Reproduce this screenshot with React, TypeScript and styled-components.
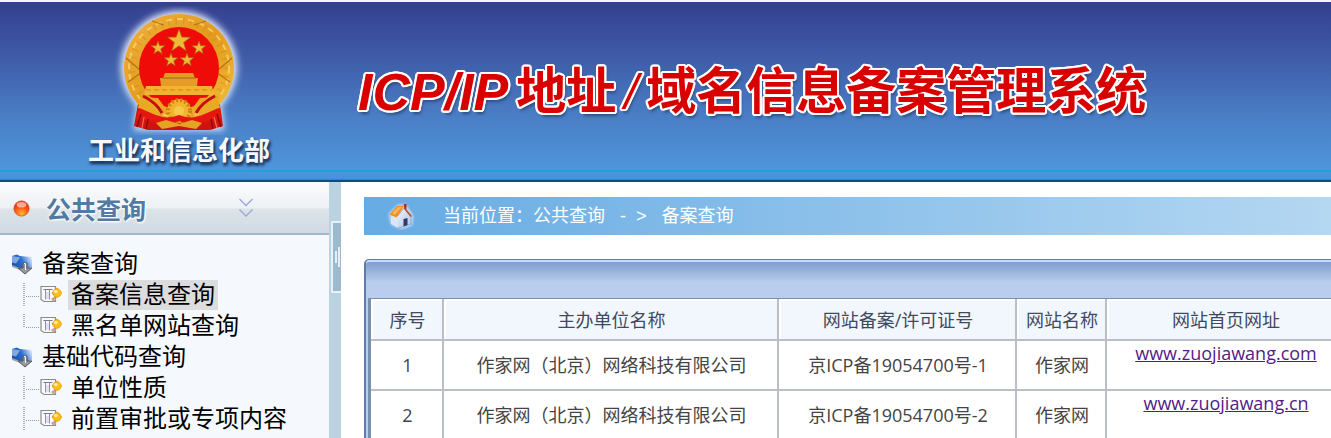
import React from "react";
import styled, { createGlobalStyle } from "styled-components";

const GlobalStyle = createGlobalStyle`
  *, *::before, *::after { box-sizing: border-box; }
  body {
    margin: 0;
    background: #fff;
    font-family: "Open Sans", "Noto Sans CJK SC", sans-serif;
    font-size: 18px;
    color: #444;
  }
  h1, h2, p, ul { margin: 0; padding: 0; }
  ul { list-style: none; }
`;

const Shell = styled.div`
  display: flex;
  flex-direction: column;
  height: 100vh;
  overflow: hidden;
`;

const Banner = styled.header`
  flex: none;
  display: flex;
  align-items: flex-start;
  border-top: 2px solid #f4f6fa;
  border-bottom: 2px solid #0d4c8c;
  background: linear-gradient(#343f90 0, #3f5ca8 56px, #4a7fc6 116px, #4f95da 168px, #22a0dc 168px, #22a0dc 170px, #4f95da 170px, #4a90d8 177px, #2f74bc 178px);
  white-space: nowrap;
`;

const Ministry = styled.div`
  display: flex;
  flex-direction: column;
  align-items: center;
  flex: none;
  width: 358px;
  height: 178px;
  padding-top: 4px;
`;

const MinistryName = styled.p`
  font-family: "Noto Sans CJK SC", sans-serif;
  font-size: 26px;
  line-height: 28px;
  font-weight: 700;
  color: #f6f8fc;
  text-shadow: 1px 3px 3px #17365f, 2px 2px 3px #2a4c7c;
`;

const Title = styled.h1`
  display: flex;
  align-items: center;
  gap: 8px;
  padding-top: 62px;
  font-size: 50px;
  line-height: 56px;
  font-weight: 700;
  color: #d90000;
  font-family: "Liberation Sans", "Noto Sans CJK SC", sans-serif;
  text-shadow: 2px 0 0 #fff, -2px 0 0 #fff, 0 2px 0 #fff, 0 -2px 0 #fff,
    1px 1px 0 #fff, -1px 1px 0 #fff, 1px -1px 0 #fff, -1px -1px 0 #fff,
    2px 1px 0 #fff, -2px 1px 0 #fff, 2px -1px 0 #fff, -2px -1px 0 #fff,
    1px 2px 0 #fff, -1px 2px 0 #fff, 1px -2px 0 #fff, -1px -2px 0 #fff,
    2px 4px 3px #2d4f80;
`;

const TitleLatin = styled.span`
  font-size: 52px;
  font-style: italic;
`;

const TitleSlash = styled.span`
  font-weight: 400;
  font-style: italic;
`;

const Body = styled.div`
  flex: 1;
  display: flex;
  min-height: 0;
`;

const Sidebar = styled.nav`
  flex: none;
  width: 329px;
  overflow: hidden;
  background: #f5f9fe;
`;

const MenuHeader = styled.button`
  display: flex;
  align-items: center;
  width: 100%;
  height: 53px;
  padding: 1px 0 0 13px;
  border: 0;
  border-bottom: 2px solid #a3b9ca;
  background: linear-gradient(#fbfcfd 0, #edf0f4 26px, #dde3e9 27px, #d0dae3 100%);
`;

const MenuTitle = styled.span`
  width: 208px;
  padding-left: 16px;
  text-align: left;
  font-family: "Noto Sans CJK SC", sans-serif;
  font-size: 25px;
  line-height: 32px;
  font-weight: 700;
  color: #527ba3;
  text-shadow: 0 0 2px #fff, 0 0 3px #fff, 1px 1px 2px #fff;
`;

const Tree = styled.ul`
  padding-top: 13px;
  font-family: "Liberation Sans", "Noto Sans CJK SC", sans-serif;
  font-size: 24px;
  line-height: 31px;
  color: #000;
`;

const GroupRow = styled.div`
  display: flex;
  align-items: center;
  gap: 8px;
  height: 31px;
  padding-left: 11px;
`;

const LeafRow = styled.li`
  display: flex;
  align-items: center;
  height: 31px;
  padding-left: 23px;
`;

const LeafLink = styled.a<{ $selected?: boolean }>`
  margin-left: 5px;
  padding: 0 3px;
  line-height: 30px;
  color: #000;
  text-decoration: none;
  background: ${(p) => (p.$selected ? "#dcdcdc" : "transparent")};
`;

const Splitter = styled.div`
  flex: none;
  width: 12px;
  padding: 39px 0 0 2px;
  background: #bbd2e0;
`;

const SplitterHandle = styled.button`
  display: flex;
  align-items: center;
  justify-content: center;
  gap: 1px;
  width: 10px;
  height: 72px;
  padding: 0;
  border: 2px solid #e8f1f6;
  border-right: 0;
  border-radius: 2px 0 0 2px;
  background: #9dbacc;
`;

const Grip = styled.span<{ $tall?: boolean }>`
  width: 2px;
  height: ${(p) => (p.$tall ? 20 : 12)}px;
  background: #e4eef4;
`;

const Main = styled.main`
  flex: 1;
  min-width: 0;
  overflow: hidden;
  padding: 15px 0 0 23px;
`;

const Breadcrumb = styled.div`
  display: flex;
  align-items: center;
  height: 38px;
  padding-left: 23px;
  background: linear-gradient(90deg, #66abe3, #b4d7f2);
  color: #fff;
  white-space: nowrap;
`;

const Crumbs = styled.p`
  display: flex;
  gap: 15px;
  padding-left: 28px;
  font-family: "Liberation Sans", "Noto Sans CJK SC", sans-serif;
  line-height: 36px;
`;

const Arrow = styled.span`
  display: flex;
  gap: 10px;
`;

const Panel = styled.section`
  margin: 24px -16px 0 0;
  border: 2px solid #5f7ba8;
  border-top-width: 1px;
  border-radius: 5px 0 0 0;
  background: #b9cdee;
`;

const PanelBar = styled.div`
  height: 38px;
  border-top: 2px solid #c9dcf2;
  border-radius: 4px 0 0 0;
  background: linear-gradient(#7f9dcf, #b9cdec 20px, #bbcdef);
`;

const TableFrame = styled.div`
  margin-left: 2px;
  border-top: 1px solid #7890ab;
  border-left: 3px solid #7890ab;
`;

const Table = styled.table`
  width: 100%;
  table-layout: fixed;
  border-collapse: separate;
  border-spacing: 0;
  background: #fff;
  white-space: nowrap;
`;

const Col = styled.col<{ $width?: number }>`
  width: ${(p) => (p.$width ? `${p.$width}px` : "auto")};
`;

const HeadCell = styled.th`
  height: 42px;
  padding: 2px 0 0 2px;
  font-weight: 400;
  line-height: 24px;
  color: #3f4a5f;
  background: #f2f7fd;
  border-right: 2px solid #bbbec5;
  border-bottom: 2px solid #bbbec5;
  box-shadow: inset 2px 2px 0 #fff;
`;

const Cell = styled.td<{ $top?: boolean }>`
  height: 50px;
  padding: 0 0 0 2px;
  text-align: center;
  line-height: 24px;
  vertical-align: ${(p) => (p.$top ? "top" : "middle")};
  border-right: 2px solid #bbbec5;
  border-bottom: 2px solid #bbbec5;
`;

const SiteLink = styled.a`
  color: #551a8b;
  text-decoration: underline;
`;

function star(cx: number, cy: number, r: number) {
  return Array.from({ length: 10 }, (_, i) => {
    const a = (Math.PI / 5) * i - Math.PI / 2;
    const d = i % 2 ? r * 0.4 : r;
    return `${(cx + d * Math.cos(a)).toFixed(1)},${(cy + d * Math.sin(a)).toFixed(1)}`;
  }).join(" ");
}

function Emblem() {
  return (
    <svg width="134" height="129" viewBox="0 0 134 129" aria-hidden="true">
      <defs>
        <filter id="glow" x="-20%" y="-20%" width="140%" height="140%">
          <feGaussianBlur stdDeviation="3.5" />
        </filter>
        <linearGradient id="gold" x1="0" y1="0" x2="1" y2="1">
          <stop offset="0" stopColor="#f0b13c" />
          <stop offset="0.5" stopColor="#e39b1d" />
          <stop offset="1" stopColor="#f3bf3a" />
        </linearGradient>
      </defs>
      <g filter="url(#glow)" fill="#e3edff">
        <ellipse cx="67" cy="61" rx="58" ry="56" />
        <path d="M26 92h82l4 32H22z" />
      </g>
      <path d="M27 92l-5 28 14 4h62l13-4-4-28z" fill="#cf1410" />
      <ellipse cx="67" cy="62" rx="55" ry="54" fill="url(#gold)" />
      <ellipse cx="67" cy="62" rx="47" ry="47" fill="none" stroke="#c97f12" strokeWidth="7" strokeDasharray="1.500 6" opacity="0.35" />
      <ellipse cx="67" cy="62" rx="50" ry="49" fill="none" stroke="#ffd978" strokeWidth="2" strokeDasharray="6 5" opacity="0.7" />
      <path d="M16 76l14-10M14 52l14 12M118 76l-14-10M120 52l-14 12M40 15l12 4M94 15l-12 4" stroke="#a9640b" strokeWidth="1.2" opacity="0.8" />
      <ellipse cx="67" cy="62" rx="40" ry="41" fill="#ee0b08" />
      <g fill="#eebb37" stroke="#a96a12" strokeWidth="0.7">
        <polygon points={star(67, 35, 12)} />
        <polygon points={star(46, 42, 7)} />
        <polygon points={star(87, 42, 7)} />
        <polygon points={star(59, 54, 7)} />
        <polygon points={star(75, 54, 7)} />
      </g>
      <path d="M53 67h28l2 5h3l-1 8H49l-1-8h3z" fill="#e69b26" />
      <path d="M50 72h34" stroke="#a56312" strokeWidth="1" />
      <path d="M34 80h66l2 9H32z" fill="#f0b431" />
      <path d="M34 84h66" stroke="#b5740e" strokeWidth="1" strokeDasharray="5 3" opacity="0.7" />
      <path d="M28 91l18 1 8 11-12 8-16-9zM106 91l-18 1-8 11 12 8 16-9z" fill="#e9a925" />
      <path d="M31 90c8 4 14 8 19 17M103 90c-8 4-14 8-19 17" fill="none" stroke="#c40d0d" strokeWidth="3" />
      <circle cx="67" cy="105" r="12" fill="#f0b42d" />
      <circle cx="67" cy="105" r="11" fill="none" stroke="#d27d11" strokeWidth="4" strokeDasharray="2 2.400" />
      <circle cx="67" cy="105" r="5" fill="#f5c847" />
      <path d="M27 102c12 4 24 14 40 7 16 7 28-3 40-7l3 11c-12 0-26 9-43 2-17 7-31-2-43-2z" fill="#e51510" />
      <path d="M44 117l10-3 13 4 13-4 10 3-6 6-17-3-17 3z" fill="#e5a323" />
      <path d="M29 108l-4 13M36 113l-2 10M99 113l2 10M105 108l4 13" stroke="#8e0808" strokeWidth="1.4" />
      <path d="M32 111l-2 11M102 111l3 11" stroke="#ff6a52" strokeWidth="1.2" />
    </svg>
  );
}

function RedDot() {
  return (
    <svg width="17" height="17" viewBox="0 0 17 17" aria-hidden="true">
      <defs>
        <radialGradient id="dot" cx="0.5" cy="0.85" r="0.9">
          <stop offset="0" stopColor="#ffc12e" />
          <stop offset="0.45" stopColor="#ff5a16" />
          <stop offset="1" stopColor="#e2200a" />
        </radialGradient>
      </defs>
      <circle cx="8.5" cy="8.5" r="7.600" fill="url(#dot)" stroke="#d84a20" strokeWidth="0.8" />
      <ellipse cx="8.5" cy="4.800" rx="4.800" ry="2.800" fill="#fff" opacity="0.55" />
    </svg>
  );
}

function DoubleChevron() {
  return (
    <svg width="16" height="20" viewBox="0 0 16 20" fill="none" stroke="#9aa6da" strokeWidth="1.300" aria-hidden="true">
      <path d="M1.500 1l6.500 6.500L14.500 1M1.500 11.500l6.500 6.500 6.500-6.500" />
    </svg>
  );
}

function FolderIcon() {
  return (
    <svg width="23" height="22" viewBox="0 0 23 22" aria-hidden="true">
      <defs>
        <linearGradient id="folder" x1="0" y1="0.6" x2="1" y2="0.2">
          <stop offset="0" stopColor="#174fae" />
          <stop offset="0.5" stopColor="#2f70cf" />
          <stop offset="1" stopColor="#e4f1fc" />
        </linearGradient>
      </defs>
      <path d="M1 3l5-1.500 3 1.500 12 1v10l-9 3-11-4z" fill="url(#folder)" />
      <path d="M1 3l8 1.500-4 6-4-1z" fill="#a9c9ee" opacity="0.7" />
      <path d="M1 12l11 4v2L1 14z" fill="#9ba3ac" />
      <path d="M12 10h4v5h5l-7 6-7-6h5z" fill="#96999e" stroke="#55585e" strokeWidth="1" />
      <path d="M13 10.500h1.500V17" fill="none" stroke="#f2f2f2" strokeWidth="1" />
    </svg>
  );
}

function PageIcon() {
  return (
    <svg width="23" height="19" viewBox="0 0 23 19" aria-hidden="true">
      <path d="M1 1.500h14.500v15H4L1 14.500z" fill="#fafafc" stroke="#8b8b8b" strokeWidth="1.200" />
      <path d="M3.500 4.500h9" stroke="#77779f" strokeWidth="1" />
      <path d="M5.500 4.500v10M9.500 4.500v10" stroke="#8f8fb0" strokeWidth="1" />
      <path d="M6 7h3v7H6z" fill="#e2dff2" />
      <path d="M11 14l4-3 1 4-3 1.500z" fill="#c9a58b" />
      <path d="M17 2.500l5 5.500-5 5-5.500-5z" fill="#e3a012" />
      <circle cx="17" cy="8" r="4.200" fill="#ffbf14" stroke="#d9960f" strokeWidth="0.600" />
      <ellipse cx="15.800" cy="6.400" rx="1.900" ry="1.500" fill="#fff1a8" />
    </svg>
  );
}

function Branch({ last }: { last?: boolean }) {
  return (
    <svg width="17" height="24" viewBox="0 0 17 24" stroke="#9a9a9a" strokeWidth="1" strokeDasharray="1 1" aria-hidden="true">
      <path d={last ? "M0.500 0v14M1.500 0v14" : "M0.500 0v24M1.500 0v24"} opacity="0.75" />
      <path d="M3 13.500h14" />
    </svg>
  );
}

function HomeIcon() {
  return (
    <svg width="28" height="28" viewBox="0 0 28 28" aria-hidden="true">
      <defs>
        <filter id="halo" x="-20%" y="-20%" width="140%" height="140%">
          <feGaussianBlur stdDeviation="1.600" />
        </filter>
        <linearGradient id="wall" x1="0" y1="0" x2="1" y2="1">
          <stop offset="0" stopColor="#fff" />
          <stop offset="1" stopColor="#a9c3ee" />
        </linearGradient>
      </defs>
      <path d="M2 12L11 3h8l7 11-1 9-11 4-10-5z" fill="#fff" opacity="0.75" filter="url(#halo)" />
      <path d="M17 2h2.500v7H17z" fill="#a92b1c" />
      <path d="M4 13l6 2 7-9 7 8v8l-12 4-7-4z" fill="url(#wall)" stroke="#6f83bd" strokeWidth="0.600" />
      <path d="M4 13v9l7 4V14z" fill="#dbe5f8" />
      <path d="M17 4.500l8 9.500-1.500 1-6.500-8z" fill="#b5533a" />
      <path d="M2.500 12.500L10 4l7.500-.5-8 12z" fill="#f68b1c" />
      <path d="M5 11.500l6-6.500 4-.3-7 8.300z" fill="#ffb454" />
      <path d="M16.500 17l4-1v7l-4 1.500z" fill="#35395f" />
    </svg>
  );
}

type Leaf = { label: string; selected?: boolean; last?: boolean };

const groups: { label: string; items: Leaf[] }[] = [
  {
    label: "备案查询",
    items: [
      { label: "备案信息查询", selected: true },
      { label: "黑名单网站查询", last: true },
    ],
  },
  {
    label: "基础代码查询",
    items: [{ label: "单位性质" }, { label: "前置审批或专项内容" }],
  },
];

const rows = [
  { no: 1, owner: "作家网（北京）网络科技有限公司", licence: "京ICP备19054700号-1", site: "作家网", url: "www.zuojiawang.com" },
  { no: 2, owner: "作家网（北京）网络科技有限公司", licence: "京ICP备19054700号-2", site: "作家网", url: "www.zuojiawang.cn" },
];

const headings = ["序号", "主办单位名称", "网站备案/许可证号", "网站名称", "网站首页网址"];

export default function App() {
  return (
    <Shell>
      <GlobalStyle />
      <Banner>
        <Ministry>
          <Emblem />
          <MinistryName>工业和信息化部</MinistryName>
        </Ministry>
        <Title>
          <TitleLatin>ICP/IP</TitleLatin>
          <span>地址</span>
          <TitleSlash>/</TitleSlash>
          <span>域名信息备案管理系统</span>
        </Title>
      </Banner>
      <Body>
        <Sidebar>
          <MenuHeader type="button">
            <RedDot />
            <MenuTitle>公共查询</MenuTitle>
            <DoubleChevron />
          </MenuHeader>
          <Tree>
            {groups.map((g) => (
              <li key={g.label}>
                <GroupRow>
                  <FolderIcon />
                  {g.label}
                </GroupRow>
                <ul>
                  {g.items.map((item) => (
                    <LeafRow key={item.label}>
                      <Branch last={item.last} />
                      <PageIcon />
                      <LeafLink href="#" $selected={item.selected}>
                        {item.label}
                      </LeafLink>
                    </LeafRow>
                  ))}
                </ul>
              </li>
            ))}
          </Tree>
        </Sidebar>
        <Splitter>
          <SplitterHandle type="button" aria-label="收起菜单">
            <Grip />
            <Grip $tall />
          </SplitterHandle>
        </Splitter>
        <Main>
          <Breadcrumb>
            <HomeIcon />
            <Crumbs>
              <span>当前位置：公共查询</span>
              <Arrow>
                <span>-</span>
                <span>&gt;</span>
              </Arrow>
              <span>备案查询</span>
            </Crumbs>
          </Breadcrumb>
          <Panel>
            <PanelBar />
            <TableFrame>
              <Table>
                <colgroup>
                  <Col $width={73} />
                  <Col $width={335} />
                  <Col $width={238} />
                  <Col $width={90} />
                  <Col />
                </colgroup>
                <thead>
                  <tr>
                    {headings.map((h) => (
                      <HeadCell key={h} scope="col">{h}</HeadCell>
                    ))}
                  </tr>
                </thead>
                <tbody>
                  {rows.map((r) => (
                    <tr key={r.no}>
                      <Cell>{r.no}</Cell>
                      <Cell>{r.owner}</Cell>
                      <Cell>{r.licence}</Cell>
                      <Cell>{r.site}</Cell>
                      <Cell $top>
                        <SiteLink href="#">{r.url}</SiteLink>
                      </Cell>
                    </tr>
                  ))}
                </tbody>
              </Table>
            </TableFrame>
          </Panel>
        </Main>
      </Body>
    </Shell>
  );
}
